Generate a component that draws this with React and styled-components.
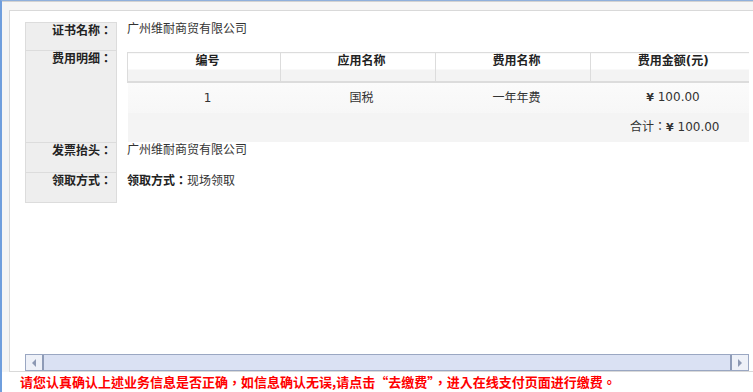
import React from 'react'
import styled, { createGlobalStyle } from 'styled-components'

const GlobalStyle = createGlobalStyle`
  html, body {
    margin: 0;
    padding: 0;
    background: #fff;
    overflow: hidden;
  }
  body {
    font-family: "DejaVu Sans", "Noto Sans CJK SC", sans-serif;
    font-size: 12px;
    color: #333;
  }
`

const fees = [{ id: 1, app: `国税`, name: `一年年费`, amount: `100.00` }]

export default function App() {
  return (
    <Page>
      <GlobalStyle />
      <Frame>
        <Panel>
          <InfoGrid>
            <Label>证书名称：</Label>
            <Value>广州维耐商贸有限公司</Value>

            <Label>费用明细：</Label>
            <Value flush>
              <FeeTable>
                <colgroup>
                  <col style={{ width: 153 }} />
                  <col style={{ width: 155 }} />
                  <col style={{ width: 155 }} />
                  <col style={{ width: 158 }} />
                </colgroup>
                <thead>
                  <tr>
                    <Th>编号</Th>
                    <Th>应用名称</Th>
                    <Th>费用名称</Th>
                    <Th>费用金额(元)</Th>
                  </tr>
                </thead>
                <tbody>
                  {fees.map(fee => (
                    <DataRow key={fee.id}>
                      <Td>{fee.id}</Td>
                      <Td>{fee.app}</Td>
                      <Td>{fee.name}</Td>
                      <Td>
                        <Yen>¥</Yen> {fee.amount}
                      </Td>
                    </DataRow>
                  ))}
                  <TotalRow>
                    <TotalCell colSpan={4}>
                      <Colon>合计：</Colon>
                      <Yen>¥</Yen> 100.00
                    </TotalCell>
                  </TotalRow>
                </tbody>
              </FeeTable>
            </Value>

            <Label>发票抬头：</Label>
            <Value>广州维耐商贸有限公司</Value>

            <Label>领取方式：</Label>
            <Value>
              <Strong>领取方式：</Strong>现场领取
            </Value>
          </InfoGrid>

          <ScrollBar>
            <ArrowButton>
              <svg width='5' height='8' viewBox='0 0 5 8'>
                <path d='M4 0 L0 4 L4 8 Z' fill='#8d99b3' />
              </svg>
            </ArrowButton>
            <Thumb />
            <ArrowButton>
              <svg width='5' height='8' viewBox='0 0 5 8'>
                <path d='M1 0 L5 4 L1 8 Z' fill='#8d99b3' />
              </svg>
            </ArrowButton>
          </ScrollBar>
        </Panel>
      </Frame>
      <Notice>
        请您认真确认上述业务信息是否正确，如信息确认无误,请点击“去缴费”，进入在线支付页面进行缴费。
      </Notice>
    </Page>
  )
}

const Page = styled.div`
  height: 392px;
  box-sizing: border-box;
  border-left: 2px solid #6f9edd;
  border-top: 1px solid #8fb0dc;
  display: flex;
  flex-direction: column;
`

const Frame = styled.div`
  background: #f5f5f5;
  border-top: 1px solid #d2d2d2;
  padding: 8px 0 0 7px;
  height: 362px;
  display: flex;
`

const Panel = styled.div`
  flex: 1;
  background: #fff;
  border: 1px solid #d9d9d9;
  border-right: none;
  padding: 11px 5px 0 15px;
  display: flex;
  flex-direction: column;
`

const InfoGrid = styled.div`
  display: grid;
  grid-template-columns: 92px 1fr;
  grid-template-rows: 29px 92px 30px 30px;
`

const Label = styled.div`
  background: #eeeeee;
  border: 1px solid #dcdcdc;
  border-top: none;
  text-align: right;
  padding-right: 4px;
  font-family: "Noto Sans CJK TC", sans-serif;
  font-weight: bold;
  color: #222;
  line-height: 14px;
  &:first-child {
    border-top: 1px solid #dcdcdc;
  }
`

const Value = styled.div`
  padding-left: 10px;
  padding-top: ${({ flush }) => (flush ? '1px' : '0')};
  line-height: 14px;
  color: #333;
`

const Strong = styled.strong`
  font-family: "Noto Sans CJK TC", sans-serif;
  color: #222;
`

const Colon = styled.span`
  font-family: "Noto Sans CJK TC", sans-serif;
`

const FeeTable = styled.table`
  border-collapse: collapse;
  table-layout: fixed;
  width: 621px;
`

const Th = styled.th`
  height: 29px;
  box-sizing: border-box;
  vertical-align: top;
  padding: 1px 0 0 7px;
  line-height: 14px;
  font-weight: bold;
  color: #222;
  border-top: 1px solid #dcdcdc;
  border-left: 1px solid #dcdcdc;
  border-bottom: 2px solid #dcdcdc;
  background: linear-gradient(to bottom, #fff 0, #fff 58%, #f3f3f3 58%, #f3f3f3 100%);
`

const DataRow = styled.tr`
  background: linear-gradient(to bottom, #fbfbfb, #f7f7f7);
`

const Td = styled.td`
  height: 30px;
  padding: 0 0 0 7px;
  text-align: center;
  color: #333;
`

const TotalRow = styled.tr`
  background: #f4f4f4;
`

const TotalCell = styled.td`
  height: 29px;
  padding: 0 29px 0 0;
  text-align: right;
  color: #333;
`

const Yen = styled.span`
  font-weight: bold;
  font-size: 11px;
`

const ScrollBar = styled.div`
  margin-top: auto;
  height: 17px;
  box-sizing: border-box;
  display: flex;
  border: 1px solid #9aa7c2;
  background: #dde3f3;
`

const ArrowButton = styled.div`
  width: 16px;
  display: flex;
  align-items: center;
  justify-content: center;
  background: #eef1f8;
`

const Thumb = styled.div`
  flex: 1;
  background: #dae1f3;
  border-left: 2px solid #8e9bb7;
  border-right: 2px solid #8e9bb7;
`

const Notice = styled.div`
  padding: 1px 0 0 18px;
  font-size: 13px;
  line-height: 17px;
  font-weight: bold;
  color: #ff0000;
  font-family: "Noto Sans CJK TC", sans-serif;
`
